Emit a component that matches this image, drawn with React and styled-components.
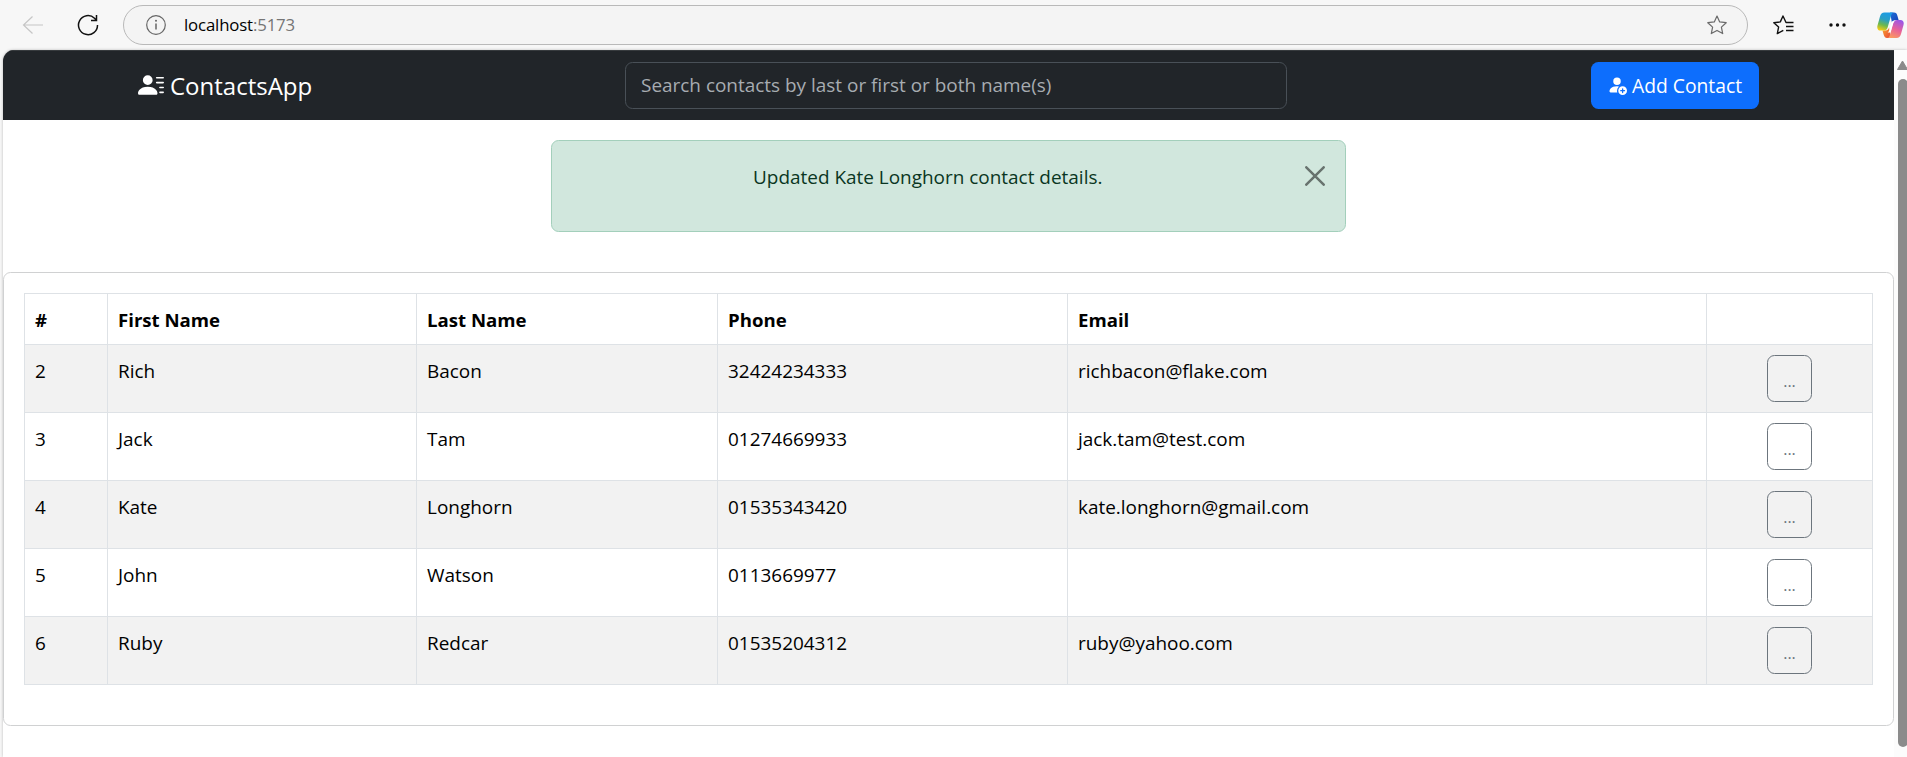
import React from 'react';
import styled, { createGlobalStyle } from 'styled-components';
import { BsPersonLinesFill, BsPersonFillAdd } from 'react-icons/bs';

const GlobalStyle = createGlobalStyle`
  *, *::before, *::after { box-sizing: border-box; }
  body {
    margin: 0;
    overflow: hidden;
    background: #f7f7f7;
    font-family: 'Open Sans', 'Noto Sans', sans-serif;
    font-size: 18.95px;
    color: #000;
  }
`;

const Browser = styled.div`
  display: flex;
  flex-direction: column;
  width: 1907px;
  height: 757px;
  overflow: hidden;
`;

const Toolbar = styled.div`
  display: flex;
  align-items: center;
  flex: none;
  height: 50px;
  padding-left: 22px;
`;

const BackIcon = styled.svg`
  flex: none;
  width: 22px;
  height: 20px;
  margin-right: 33px;
`;

const ReloadIcon = styled.svg`
  flex: none;
  width: 22px;
  height: 22px;
  margin-right: 24px;
`;

const AddressBar = styled.div`
  display: flex;
  align-items: center;
  flex: none;
  width: 1625px;
  height: 40px;
  padding: 0 20px 0 22px;
  border: 1px solid #b9b9b9;
  border-radius: 20px;
  background: #f4f4f4;
`;

const InfoIcon = styled.svg`
  flex: none;
  width: 20px;
  height: 20px;
  margin-right: 18px;
`;

const Url = styled.span`
  flex: 1;
  font-size: 16.8px;
  letter-spacing: -0.15px;
  line-height: 38px;
`;

const Port = styled.span`
  color: #757575;
`;

const StarIcon = styled.svg`
  flex: none;
  width: 20px;
  height: 20px;
`;

const FavoritesIcon = styled.svg`
  flex: none;
  width: 21px;
  height: 20px;
  margin-left: 25px;
`;

const MoreIcon = styled.svg`
  flex: none;
  width: 17px;
  height: 4px;
  margin-left: 35px;
`;

const CopilotIcon = styled.svg`
  flex: none;
  width: 27px;
  height: 27px;
  margin-left: 30.5px;
`;

const Viewport = styled.div`
  display: flex;
  flex: 1;
  min-height: 0;
  margin-left: 3px;
  border-radius: 11px 0 0 0;
  overflow: hidden;
  background: #fff;
  box-shadow: 0 0 3px rgba(0, 0, 0, 0.25);
`;

const Page = styled.div`
  flex: none;
  width: 1891px;
`;

const Navbar = styled.nav`
  display: flex;
  align-items: center;
  height: 70px;
  padding: 0 135px 1px;
  background: #212529;
  border-top: 1px solid #373b3e;
`;

const Brand = styled.div`
  display: flex;
  align-items: center;
  width: 487px;
  color: #fff;
  font-size: 24px;
  svg {
    width: 26px;
    height: 26px;
    margin-right: 6px;
  }
`;

const Search = styled.input`
  width: 662px;
  height: 47px;
  padding: 0 15px;
  border: 1px solid #495057;
  border-radius: 7.5px;
  background: #212529;
  color: #dee2e6;
  font: inherit;
  outline: none;
  &::placeholder {
    color: #a7acb1;
    opacity: 1;
  }
`;

const AddButton = styled.button`
  display: flex;
  align-items: center;
  justify-content: center;
  width: 168px;
  height: 47px;
  margin-left: auto;
  padding: 0 1px 0 0;
  border: 0;
  border-radius: 7.5px;
  background: #0d6efd;
  color: #fff;
  font: inherit;
  font-size: 19.3px;
  svg {
    width: 20px;
    height: 20px;
    margin-right: 5px;
  }
`;

const Alert = styled.div`
  display: flex;
  justify-content: space-between;
  align-items: flex-start;
  width: 795px;
  height: 92px;
  margin: 20px 0 40px 548px;
  padding: 22px 20px 0 201px;
  border: 1px solid #a3cfbb;
  border-radius: 7.5px;
  background: #d1e7dd;
  color: #0a3622;
  line-height: 28px;
`;

const CloseIcon = styled.svg`
  width: 20px;
  height: 20px;
  margin-top: 3px;
`;

const Card = styled.div`
  height: 454px;
  padding: 20px;
  border: 1px solid #d0d1d2;
  border-radius: 7.5px;
`;

const Table = styled.table`
  width: 1849px;
  table-layout: fixed;
  border-collapse: collapse;
`;

const Column = styled.col`
  width: ${(p) => p.$width}px;
`;

const HeadCell = styled.th`
  height: 51px;
  padding: 0 10px;
  border: 1px solid #dee2e6;
  text-align: left;
  font-weight: 700;
  font-size: 18.6px;
`;

const Row = styled.tr`
  height: 68px;
  background: ${(p) => (p.$striped ? '#f2f2f2' : '#fff')};
`;

const Cell = styled.td`
  padding: 10px 10px 0;
  border: 1px solid #dee2e6;
  vertical-align: top;
  line-height: 32px;
`;

const ActionCell = styled(Cell)`
  padding: 10px 0 0;
  text-align: center;
  line-height: 0;
`;

const MenuButton = styled.button`
  width: 45px;
  height: 47px;
  padding: 4px 0 0;
  border: 1px solid #6c757d;
  border-radius: 7.5px;
  background: transparent;
  color: #6c757d;
  font: inherit;
  font-size: 16px;
  line-height: 30px;
`;

const Scrollbar = styled.div`
  display: flex;
  flex-direction: column;
  flex: 1;
  padding: 10px 0 0 4px;
  background: #fcfcfc;
`;

const ScrollArrow = styled.svg`
  width: 10px;
  height: 10px;
  margin-left: -1px;
`;

const ScrollThumb = styled.div`
  width: 10px;
  height: 668px;
  margin-top: 9px;
  border-radius: 5px;
  background: #8b8b8b;
`;

const columns = [83, 309, 301, 350, 639, 166];
const headings = ['#', 'First Name', 'Last Name', 'Phone', 'Email', ''];
const contacts = [
  ['2', 'Rich', 'Bacon', '32424234333', 'richbacon@flake.com'],
  ['3', 'Jack', 'Tam', '01274669933', 'jack.tam@test.com'],
  ['4', 'Kate', 'Longhorn', '01535343420', 'kate.longhorn@gmail.com'],
  ['5', 'John', 'Watson', '0113669977', ''],
  ['6', 'Ruby', 'Redcar', '01535204312', 'ruby@yahoo.com'],
];

function Copilot() {
  return (
    <CopilotIcon viewBox="0 0 27 27">
      <defs>
        <linearGradient id="cpLeft" x1="0.6" y1="0" x2="0.3" y2="1">
          <stop offset="0" stopColor="#1b9be6" />
          <stop offset="0.4" stopColor="#2a9fc4" />
          <stop offset="0.7" stopColor="#6cb84e" />
          <stop offset="1" stopColor="#f3cb14" />
        </linearGradient>
        <linearGradient id="cpRight" x1="0.7" y1="0" x2="0.3" y2="1">
          <stop offset="0" stopColor="#9a55e8" />
          <stop offset="0.5" stopColor="#e8609a" />
          <stop offset="1" stopColor="#fb9a60" />
        </linearGradient>
        <linearGradient id="cpTop" x1="0" y1="0" x2="1" y2="1">
          <stop offset="0" stopColor="#1d6fd8" />
          <stop offset="1" stopColor="#173fb4" />
        </linearGradient>
        <linearGradient id="cpBottom" x1="0" y1="0" x2="1" y2="1">
          <stop offset="0" stopColor="#f9a62b" />
          <stop offset="1" stopColor="#e8433a" />
        </linearGradient>
      </defs>
      <path d="M13 .5h4c2 0 2.800 1.200 3.400 3.200l1.200 4.300h-3c-2 0-3 1-3.600 3z" fill="url(#cpTop)" />
      <path d="M14 26h-4c-2 0-2.700-1.200-3.300-3.200L5.500 18.500h3c2 0 3-1 3.600-3z" fill="url(#cpBottom)" />
      <path d="M7.500.5H17c-1.700 0-2.400 1.300-3 3.300l-3.300 11.400c-.7 2.300-1.700 3.400-4 3.400H3.500C.7 18.600-.2 16.200.5 13.500L3 4.500C3.800 1.800 5 .5 7.500.5z" fill="url(#cpLeft)" />
      <path d="M19.500 26H10c1.700 0 2.400-1.300 3-3.300l3.300-11.400c.7-2.300 1.700-3.400 4-3.400h3.200c2.800 0 3.700 2.400 3 5.100L24 22c-.8 2.700-2 4-4.500 4z" fill="url(#cpRight)" />
      <path d="M15.200 9.200h2.600c-1.100.6-1.600 1.700-2 3l-2 6.800c-.2.700-.5 1.200-.9 1.600h-2.300c.9-.6 1.400-1.500 1.800-2.800l2-6.800c.2-.8.5-1.400.8-1.800z" fill="#fff" />
    </CopilotIcon>
  );
}

export default function App() {
  return (
    <Browser>
      <GlobalStyle />
      <Toolbar>
        <BackIcon viewBox="0 0 22 20" fill="none" stroke="#c6c6c6" strokeWidth="1.2">
          <path d="M21 10H1.500M10.500 1.500L1.500 10l9 8.500" />
        </BackIcon>
        <ReloadIcon viewBox="0 0 22 22" fill="none" stroke="#111" strokeWidth="1.500">
          <path d="M20.500 11A9.500 9.500 0 1 1 17.500 4.200L19.500 6.200M19.500 1v5.500H14" />
        </ReloadIcon>
        <AddressBar>
          <InfoIcon viewBox="0 0 20 20" fill="none" stroke="#666" strokeWidth="1.200">
            <circle cx="10" cy="10" r="9.300" />
            <path d="M10 8.500v6" strokeWidth="1.500" />
            <circle cx="10" cy="5.800" r="1" fill="#666" stroke="none" />
          </InfoIcon>
          <Url>
            localhost<Port>:5173</Port>
          </Url>
          <StarIcon viewBox="0 0 20 20" fill="none" stroke="#6a6a6a" strokeWidth="1.200" strokeLinejoin="round">
            <path d="M10 1l2.700 5.900 6.500.8-4.800 4.400 1.300 6.500L10 15.400l-5.700 3.200 1.300-6.500L.8 7.700l6.500-.8z" />
          </StarIcon>
        </AddressBar>
        <FavoritesIcon viewBox="0 0 21 20" fill="none" stroke="#111" strokeWidth="1.400" strokeLinejoin="round">
          <path d="M20.500 7.500H13L10 1 7.300 6.900l-6.500.8 4.800 4.400-1.300 6.500 6-3.200M13 11.500h7.500M13 15.500h7.500" />
        </FavoritesIcon>
        <MoreIcon viewBox="0 0 17 4" fill="#111">
          <circle cx="2" cy="2" r="1.700" />
          <circle cx="8.500" cy="2" r="1.700" />
          <circle cx="15" cy="2" r="1.700" />
        </MoreIcon>
        <Copilot />
      </Toolbar>
      <Viewport>
        <Page>
          <Navbar>
            <Brand>
              <BsPersonLinesFill />
              ContactsApp
            </Brand>
            <Search placeholder="Search contacts by last or first or both name(s)" />
            <AddButton>
              <BsPersonFillAdd />
              Add Contact
            </AddButton>
          </Navbar>
          <Alert>
            Updated Kate Longhorn contact details.
            <CloseIcon viewBox="0 0 20 20" fill="none" stroke="#68736e" strokeWidth="2.500" strokeLinecap="round">
              <path d="M1.300 1.300l17.400 17.400M18.700 1.300L1.300 18.700" />
            </CloseIcon>
          </Alert>
          <Card>
            <Table>
              <colgroup>
                {columns.map((w, i) => (
                  <Column key={i} $width={w} />
                ))}
              </colgroup>
              <thead>
                <tr>
                  {headings.map((h, i) => (
                    <HeadCell key={i}>{h}</HeadCell>
                  ))}
                </tr>
              </thead>
              <tbody>
                {contacts.map((c, i) => (
                  <Row key={c[0]} $striped={i % 2 === 0}>
                    {c.map((v, j) => (
                      <Cell key={j}>{v}</Cell>
                    ))}
                    <ActionCell>
                      <MenuButton>...</MenuButton>
                    </ActionCell>
                  </Row>
                ))}
              </tbody>
            </Table>
          </Card>
        </Page>
        <Scrollbar>
          <ScrollArrow viewBox="0 0 10 10">
            <path d="M5.500 1L10.500 9.500H.5z" fill="#8b8b8b" stroke="#8b8b8b" strokeLinejoin="round" />
          </ScrollArrow>
          <ScrollThumb />
        </Scrollbar>
      </Viewport>
    </Browser>
  );
}
